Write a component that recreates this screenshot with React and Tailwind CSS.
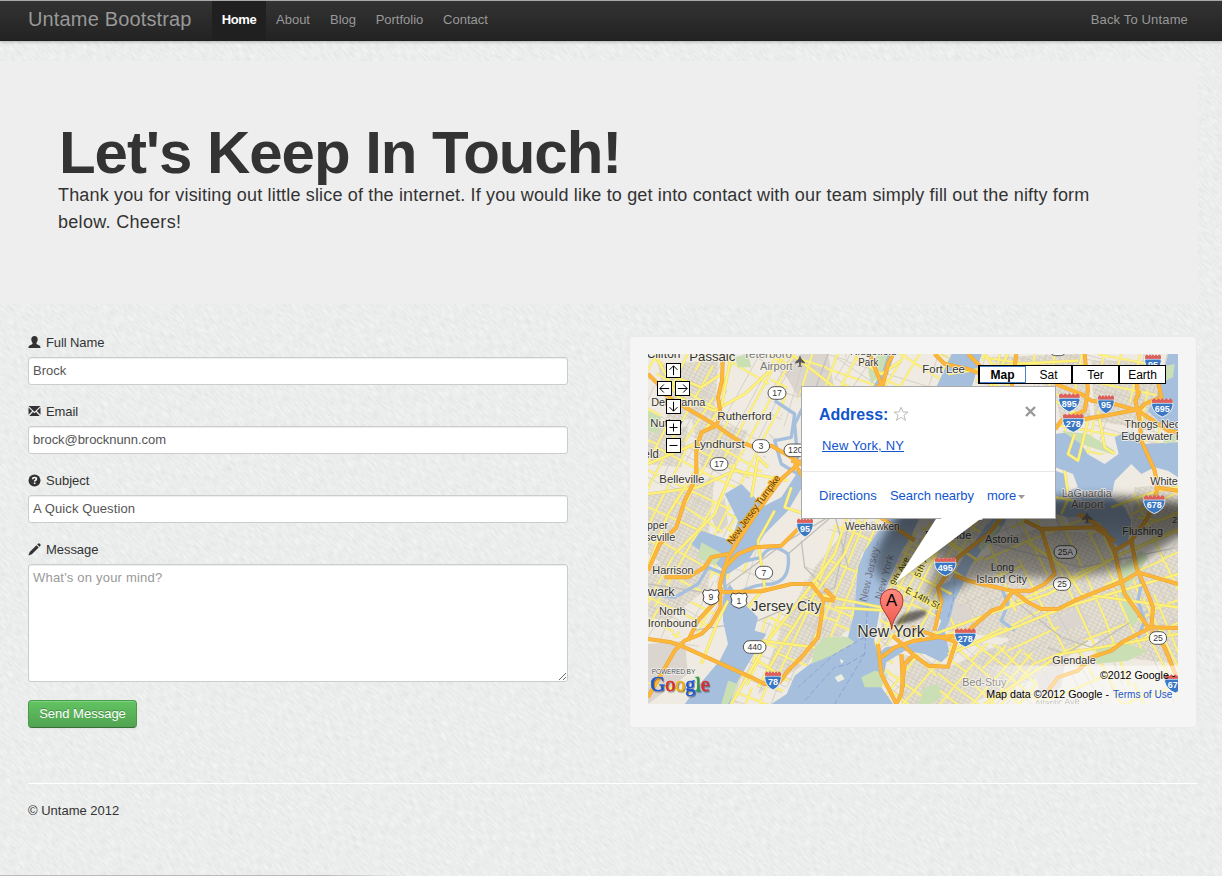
import React from "react";

/* ---------- map data (map units are a third of a pixel) ---------- */

function seeded(seed) {
  let s = seed;
  return () => {
    s = (s * 16807) % 2147483647;
    return s / 2147483647;
  };
}

function streets(seed, gap, density) {
  const rnd = seeded(seed);
  let d = "";
  for (let axis = 0; axis < 2; axis++) {
    for (let o = -1300; o < 1300; o += gap * (0.6 + rnd() * 0.9)) {
      let t = -1300;
      while (t < 1300) {
        const len = 90 + rnd() * 300;
        if (rnd() < density) {
          const w = (rnd() - 0.5) * 34;
          const a = o.toFixed(0);
          const b = (o + w).toFixed(0);
          const t0 = t.toFixed(0);
          const t1 = (t + len).toFixed(0);
          d += axis ? `M${t0} ${a}L${t1} ${b}` : `M${a} ${t0}L${b} ${t1}`;
        }
        t += len;
      }
    }
  }
  return d;
}

const regions = [
  { id: "rw", pts: "0,0 440,0 400,200 330,330 270,430 240,700 180,830 0,870", angle: 28, gap: 52, density: 0.66, seed: 11 },
  { id: "rm", pts: "440,0 900,0 900,110 460,110 420,200 330,330 280,500 480,560 620,480 520,700 240,720", angle: 18, gap: 110, density: 0.38, seed: 29 },
  { id: "rj", pts: "480,720 620,490 800,480 640,600 620,840 470,940 370,1050 240,1050 340,800", angle: 22, gap: 46, density: 0.62, seed: 37 },
  { id: "rn", pts: "560,0 960,0 960,110 560,110", angle: 30, gap: 48, density: 0.6, seed: 51 },
  { id: "rh", pts: "690,880 700,720 790,540 890,480 1060,480 960,600 870,700 860,840", angle: 28, gap: 32, density: 0.8, seed: 71 },
  { id: "rq", pts: "880,660 1010,520 1060,480 1590,400 1590,1050 1150,1050 1150,900 860,860", angle: -24, gap: 46, density: 0.66, seed: 83 },
  { id: "rb", pts: "660,860 860,840 1150,890 1180,1050 660,1050", angle: 40, gap: 36, density: 0.7, seed: 97 },
  { id: "rx", pts: "990,0 1590,0 1590,330 1470,280 1220,330 1220,110 980,110", angle: 12, gap: 42, density: 0.66, seed: 113 },
  { id: "rs", pts: "0,860 160,830 120,1050 0,1050", angle: 12, gap: 130, density: 0.4, seed: 131 },
];

const urban = [
  "30,30 210,20 200,190 60,200",
  "0,200 120,220 100,340 0,330",
  "130,190 300,230 260,330 160,340",
  "100,400 200,370 180,560 60,640 0,600 0,420",
  "0,640 200,560 180,700 60,800 0,790",
  "500,640 600,520 680,500 700,540 640,600 610,820 470,930 330,1020 400,820",
  "700,740 760,600 900,490 1040,490 900,700 860,840 700,860",
  "860,700 1020,600 1160,620 1200,760 1140,860 900,830",
  "1030,560 1190,520 1220,660 1020,690",
  "1200,530 1400,540 1440,700 1400,860 1160,840",
  "760,900 900,940 1150,830 1330,850 1200,960 960,1050 760,1050",
  "1010,10 1300,0 1330,200 1240,210 1220,110",
  "1330,20 1540,20 1520,230 1340,200",
  "1390,720 1590,560 1590,930 1340,900",
  "1460,400 1590,390 1590,540 1450,540",
];

const industrial = [
  "400,40 460,0 540,0 560,110 450,130",
  "0,870 110,860 120,960 0,1050",
  "1160,960 1250,930 1240,1000 1180,1030",
  "1200,810 1290,760 1330,800 1250,830",
  "1250,480 1400,440 1380,520 1270,520",
  "190,490 230,430 240,510 210,540",
  "900,740 970,760 960,800 900,800",
];

const water = [
  "M911 0H1001L968 110L800 110V490H815L790 545L765 585L735 650L700 740L690 800L678 860L690 900L712 880L790 870L860 850L880 800L860 780L870 730L866 700L905 680L940 620L975 570L1010 520L1040 490L1080 490L1055 530L1000 590L965 640L945 690L920 740L905 800L890 830L905 900L880 925L830 900L770 890L715 925L700 1000L735 1050H370L416 1020L440 965L486 930L540 880L600 850L618 780L630 640L650 590L700 520L720 490V300L860 110Z",
  "M230 420L280 390L330 440L350 455L400 430L445 360L462 340V400L420 470L385 505L350 540L300 620L240 660L170 600L130 570L160 530L250 560L270 500Z",
  "M225 730L245 690L280 740L330 790L320 830L355 840L300 930L270 980L245 1050H110L160 985L215 920L240 870L225 800Z",
  "M1222 240L1260 235L1300 270L1318 300L1370 330L1412 300L1400 250L1440 230L1480 270L1590 265V370L1560 350L1520 340L1480 360L1450 330L1400 380L1390 430L1430 460L1450 500L1440 560L1420 585L1390 560L1360 510L1310 485L1260 490L1222 480V350L1250 360L1260 410L1290 400L1275 360L1222 340Z",
  "M1560 0H1590V230L1550 220L1500 170L1530 120Z",
  "M715 0H740L720 60L690 110H670L700 50Z",
];

const rivers = [
  "M245 740Q210 660 250 630L340 610Q370 560 420 600Q430 680 370 690Q300 690 250 735",
  "M0 720L80 730L150 690L180 640L230 660",
  "M380 140L440 180L430 250L380 260L400 330L450 360",
  "M480 130L440 210L450 330",
  "M300 600L260 560L330 500",
  "M1450 570L1480 690L1470 740L1490 800L1470 850",
  "M1060 700L1080 750L1060 800L1100 830",
  "M980 240L1250 380",
];

const parks = [
  "M160 565L225 600L200 635L150 610Z",
  "M530 850L600 850L620 865L560 900L490 930L500 880Z",
  "M640 970L680 950L720 960L700 1000L650 1000Z",
  "M1400 650L1480 590L1500 610L1450 690L1420 700Z",
  "M1350 880L1440 870L1500 890L1440 920L1340 930Z",
  "M1530 40L1580 30L1575 70L1530 90Z",
  "M1240 230L1320 240L1400 290L1390 300L1300 270Z",
  "M1410 680L1440 700L1470 800L1450 820L1420 740Z",
  "M0 170L40 190L30 240L0 230Z",
  "M260 10L300 0L310 40L270 40Z",
  "M690 0L720 0L700 60L670 90L660 50Z",
  "M240 980L270 990L240 1050H220Z",
  "M830 1000L870 990L880 1030L850 1050H810Z",
  "M1540 250L1590 235V260L1550 270Z",
  "M1040 500L1060 520L1000 590L990 580Z",
];

const rails = [
  "M130 830L330 800L560 700L600 520",
  "M0 690L200 720L420 560L540 490",
  "M420 600L560 480L600 640",
  "M540 0L500 110",
  "M1100 740L1240 850L1330 880L1500 770",
  "M1000 560L1300 640L1590 580",
  "M460 560L470 640L530 700",
  "M1200 880L1250 900L1320 860",
];

const mainYellow = [
  "M0 330L140 270L220 160L250 0",
  "M20 0L90 130L200 170L290 120L420 0",
  "M60 60L160 100L220 60M0 420L150 400L260 350L420 380",
  "M150 340L60 480L0 640M260 330L200 480L80 600",
  "M430 0L560 100M620 10L700 60L760 20",
  "M310 430L330 310L360 340M430 400L410 460L470 480",
  "M380 470L330 560L350 700L300 760",
  "M240 740L210 800L160 930",
  "M600 480L560 600L470 720L360 860L250 1050",
  "M640 480L590 600L500 720L410 860L330 1000",
  "M500 720L700 760M560 760L720 770",
  "M330 920L420 980M340 860L500 880",
  "M900 60L1100 30L1290 20",
  "M1010 0L1090 110M1080 0L1020 110",
  "M1220 140L1320 200L1290 320L1260 300L1280 240",
  "M1350 170L1370 280L1400 300",
  "M1250 350L1262 430L1240 480M1220 430L1280 440",
  "M1390 460L1530 410L1590 400M1470 490L1530 500L1590 480",
  "M860 840L1050 770L1200 720L1420 600L1590 530",
  "M900 900L1250 760L1590 660",
  "M1010 1050L1240 900L1590 840",
  "M1130 560L1250 640L1300 720L1590 760",
  "M900 560L990 620M840 600L960 680",
  "M740 690L880 770M760 640L910 720",
];

const highways = [
  "M0 60L30 90L60 130L130 170L205 215L270 260L330 285L370 275L430 310L462 330",
  "M225 0L222 80L210 130L218 180L205 215L160 235L145 290L145 370L110 440L85 520L35 570L0 650",
  "M462 320L400 375L330 470L290 530L240 610L215 690L218 760L190 810L160 840L110 860L80 890L0 1030",
  "M470 505L400 575L320 580L270 600L230 640L215 700L225 715L340 712L430 690L490 690L525 735L520 790L510 850L460 910L420 950L395 985L350 990L310 970L110 880L70 865L0 855",
  "M120 860L150 800L205 740M50 670L120 670L170 640L190 610L240 600",
  "M462 330L430 320M440 330L465 370M560 120L590 150",
  "M665 0L680 40L700 90L670 110M700 110L720 30L735 0",
  "M700 492L800 560",
  "M860 0L890 30L960 45L1000 60M960 0L1010 50M1105 0L1090 110",
  "M1310 0L1320 110L1310 170L1240 200L1222 225",
  "M1222 90L1300 120L1330 140L1400 150L1470 170L1560 230L1590 235",
  "M1310 195L1400 180L1475 165L1490 150L1540 130L1520 30M1475 110L1462 140L1475 200L1480 260L1520 350L1530 400L1500 490L1450 560L1400 590L1370 530L1330 500L1290 480",
  "M1520 400L1590 410M1465 55L1470 130",
  "M1130 500L1180 525L1340 520L1400 560",
  "M1180 525L1200 590L1220 660L1190 690L1150 710L1090 710L1000 690L960 680L920 665",
  "M1060 492L1020 540L930 610L870 700L880 740L860 830",
  "M1095 710L1140 745L1180 765L1230 765L1280 740L1340 715L1430 680L1470 655L1590 690",
  "M1400 590L1410 640L1430 720L1480 790L1500 820L1590 822",
  "M1450 560L1465 640L1500 720L1515 760L1510 820L1430 860L1390 890L1330 910L1290 950L1230 970L1200 1010",
  "M1510 830L1550 880L1590 980",
  "M690 870L700 960L745 1050L760 1020L770 930L800 900",
  "M700 910L740 880L800 860L870 850L930 845",
  "M735 845L800 905L840 935L900 938L925 860L1030 770L1060 760L1095 710",
  "M790 820L860 845L930 865M765 1000L760 900",
  "M530 705L560 735M525 735L560 740",
];

function Interstate({ x, y, n, s = 1 }) {
  return (
    <g transform={`translate(${x} ${y}) scale(${s} 1)`}>
      <path d="M-30 -22H30L32 -6Q28 18 0 29Q-28 18 -32 -6Z" fill="#3a78c4" stroke="#fff" strokeWidth="2.5" />
      <path d="M-31 -22L-24 -27L-18 -22L-12 -27L-6 -22L0 -27L6 -22L12 -27L18 -22L24 -27L31 -22V-13H-31Z" fill="#dc5f5a" />
      <path d="M-31 -12H31" stroke="#fff" strokeWidth="2" />
      <text transform={`scale(${1 / s} 1)`} y="13" textAnchor="middle" fontSize="27" fontWeight="bold" fill="#fff">{n}</text>
    </g>
  );
}

function Route({ x, y, n, w = 54 }) {
  return (
    <g transform={`translate(${x} ${y})`}>
      <rect x={-w / 2} y="-19" width={w} height="38" rx="19" fill="#fff" stroke="#555" strokeWidth="3" />
      <text y="9" textAnchor="middle" fontSize="26" fill="#333">{n}</text>
    </g>
  );
}

function UsRoute({ x, y, n }) {
  return (
    <g transform={`translate(${x} ${y})`}>
      <path d="M-20 -22Q-10 -16 0 -22Q10 -16 20 -22L25 -12Q18 0 24 10Q18 20 0 24Q-18 20 -24 10Q-18 0 -25 -12Z" fill="#fff" stroke="#444" strokeWidth="3" />
      <text y="10" textAnchor="middle" fontSize="26" fill="#333">{n}</text>
    </g>
  );
}

const labels = [
  [-4, 13, 101, 36, "Clifton"], [124, 21, 138, 37, "Passaic"],
  [286, 12, 146, 33, "Teterboro", "#777"], [336, 47, 98, 33, "Airport", "#777"],
  [606, 4, 140, 33, "Ridgefield"], [631, 35, 60, 33, "Park"], [823, 56, 128, 34, "Fort Lee"],
  [10, 155, 162, 34, "Delawanna"], [7, 220, 96, 34, "Nutley"], [-126, 312, 158, 36, "Bloomfield"],
  [208, 197, 163, 35, "Rutherford"], [138, 281, 152, 35, "Lyndhurst"], [34, 386, 135, 35, "Belleville"],
  [-26, 524, 86, 34, "Upper"], [-51, 560, 133, 34, "Roseville"],
  [591, 529, 164, 32, "Weehawken"], [13, 659, 124, 34, "Harrison"],
  [-50, 725, 130, 40, "Newark"], [33, 784, 80, 33, "North"], [-1, 820, 148, 33, "Ironbound"],
  [310, 770, 210, 43, "Jersey City"], [628, 848, 202, 48, "New York"],
  [1429, 223, 184, 33, "Throgs Neck"], [1420, 258, 230, 33, "Edgewater Park"],
  [1507, 394, 160, 33, "Whitestone"], [1241, 428, 150, 32, "LaGuardia", "#667"], [1269, 463, 98, 32, "Airport", "#667"],
  [1423, 544, 122, 33, "Flushing"], [832, 556, 138, 33, "Riverside"], [1011, 566, 101, 33, "Astoria"],
  [1028, 650, 70, 33, "Long"], [985, 686, 152, 33, "Island City"],
  [1213, 930, 130, 33, "Glendale"], [943, 996, 132, 33, "Bed-Stuy", "#777"],
];

function ArrowBox({ x, y, kind }) {
  const d = {
    up: "M22 36V8M22 8L10 20M22 8L34 20",
    down: "M22 8V36M22 36L10 24M22 36L34 24",
    left: "M36 22H8M8 22L20 10M8 22L20 34",
    right: "M8 22H36M36 22L24 10M36 22L24 34",
    plus: "M22 10V34M10 22H34",
    minus: "M10 22H34",
  }[kind];
  return (
    <g transform={`translate(${x} ${y})`}>
      <rect x="1.500" y="1.500" width="42" height="42" fill="#fff" stroke="#000" strokeWidth="3" />
      <path d={d} transform="translate(.5 .5)" fill="none" stroke="#000" strokeWidth="3" />
    </g>
  );
}

function MapDrawing() {
  return (
    <svg className="block h-[350px] w-[530px]" viewBox="0 0 1590 1050" fontFamily="'Liberation Sans', Arial, sans-serif">
      <defs>
        <pattern id="blocks" width="14" height="11" patternUnits="userSpaceOnUse" patternTransform="rotate(27)">
          <rect width="14" height="11" fill="#e4dfd3" />
          <path d="M0 1H14M1 0V11" stroke="#cdc6ba" strokeWidth="2" />
        </pattern>
        <filter id="soft" x="-20%" y="-30%" width="140%" height="160%"><feGaussianBlur stdDeviation="15" /></filter>
        <filter id="softSmall" x="-30%" y="-50%" width="160%" height="200%"><feGaussianBlur stdDeviation="5" /></filter>
        <linearGradient id="shade" x1="0" y1="0" x2="0" y2="1">
          <stop offset=".25" stopOpacity=".6" />
          <stop offset=".7" stopOpacity=".42" />
          <stop offset="1" stopOpacity=".3" />
        </linearGradient>
        <linearGradient id="fade" x1="0" x2="1">
          <stop offset="0" stopColor="#fff" stopOpacity="0" />
          <stop offset=".35" stopColor="#fff" stopOpacity=".5" />
          <stop offset="1" stopColor="#fff" stopOpacity=".55" />
        </linearGradient>
        <linearGradient id="pin" x1="0" y1="0" x2="0" y2="1">
          <stop offset="0" stopColor="#fe8b80" />
          <stop offset="1" stopColor="#f0554c" />
        </linearGradient>
        {regions.map((r) => (
          <clipPath key={r.id} id={r.id}><polygon points={r.pts} /></clipPath>
        ))}
      </defs>
      <rect width="1590" height="1050" fill="#efebe2" />
      {urban.map((p) => <polygon key={p} points={p} fill="url(#blocks)" />)}
      {industrial.map((p) => <polygon key={p} points={p} fill="#dbd5cf" />)}
      {regions.map((r) => {
        const d = streets(r.seed, r.gap, r.density);
        const fine = streets(r.seed + 5, r.gap * 0.5, 0.3);
        return (
          <g key={r.id} clipPath={`url(#${r.id})`}>
            <g transform={`translate(795 525) rotate(${r.angle})`} fill="none">
              <path d={fine} stroke="#cfc8bd" strokeWidth="2" />
              <path d={d} stroke="#e8dc8c" strokeWidth="7" />
              <path d={d} stroke="#fff47c" strokeWidth="4.500" />
            </g>
          </g>
        );
      })}
      {rails.map((d) => <path key={d} d={d} fill="none" stroke="#c3c0bd" strokeWidth="4" />)}
      {water.map((d) => <path key={d} d={d} fill="#a5bfdd" />)}
      {rivers.map((d) => <path key={d} d={d} fill="none" stroke="#a5bfdd" strokeWidth="10" strokeLinejoin="round" />)}
      {parks.map((d) => <path key={d} d={d} fill="#cbdfb4" />)}
      <path d="M560 970L580 960L590 975L570 985ZM575 915L588 920L580 930Z" fill="#e8efe0" />
      <path d="M690 560L660 720L650 900L560 1050M650 850L560 900L450 1000M650 900L600 930L560 940L470 1040M920 680L915 740L900 790" fill="none" stroke="#8a9cd6" strokeWidth="2.500" strokeDasharray="16 8" />
      {mainYellow.map((d) => (
        <g key={d} fill="none" strokeLinejoin="round">
          <path d={d} stroke="#e3d27a" strokeWidth="9" />
          <path d={d} stroke="#fff37a" strokeWidth="6.500" />
        </g>
      ))}
      {highways.map((d) => <path key={d} d={d} fill="none" stroke="#eba235" strokeWidth="12" strokeLinejoin="round" />)}
      {highways.map((d) => <path key={d} d={d} fill="none" stroke="#fdb83c" strokeWidth="9" strokeLinejoin="round" />)}

      <g fill="#333" stroke="#f6f3ea" strokeWidth="5" strokeLinejoin="round" paintOrder="stroke">
        {labels.map(([x, y, w, size, text, fill]) => (
          <text key={text + x} x={x} y={y} fontSize={size} textLength={w} lengthAdjust="spacingAndGlyphs" fill={fill || "#333"}>{text}</text>
        ))}
        <text transform="translate(252 573) rotate(-54)" fontSize="29" textLength="248" stroke="#fdb83c" fill="#5a3a00">New Jersey Turnpike</text>
        <text transform="translate(655 745) rotate(-77)" fontSize="32" textLength="168" stroke="#a5bfdd" strokeWidth="2" fill="#778">New Jersey</text>
        <text transform="translate(700 738) rotate(-74)" fontSize="31" textLength="138" stroke="#a5bfdd" strokeWidth="2" fill="#778">New York</text>
        <text transform="translate(770 715) rotate(27)" fontSize="28" textLength="112" stroke="#fff37a">E 14th St</text>
        <text transform="translate(815 672) rotate(-66)" fontSize="27" textLength="98" stroke="#fff37a">5th Ave</text>
        <text transform="translate(742 696) rotate(-62)" fontSize="27" textLength="92" stroke="#fff37a">9th Ave</text>
        <text x="1160" y="1058" fontSize="28" textLength="135" transform="rotate(-3 1160 1058)" fill="#888">Atlantic Ave</text>
        <text x="1572" y="508" fontSize="28">25</text>
      </g>
      <path d="M456 4L460 14L470 24V29L459 25L458 34L463 38H449L454 34L453 25L442 29V24L452 14Z" fill="#555" />

      <Route x={387} y={117} n="17" /><Route x={339} y={276} n="3" w={52} /><Route x={213} y={330} n="17" />
      <Route x={442} y={289} n="120" w={68} /><Route x={348} y={656} n="7" w={52} /><Route x={320} y={879} n="440" w={68} />
      <Route x={1252} y={594} n="25A" w={68} /><Route x={1242} y={690} n="25" w={52} /><Route x={1530} y={852} n="25" w={52} />
      <Route x={1230} y={-14} n="1" w={52} />
      <UsRoute x={189} y={729} n="9" /><UsRoute x={273} y={739} n="1" />
      <Interstate x={471} y={520} n="95" s={0.77} /><Interstate x={375} y={979} n="78" s={0.77} />
      <Interstate x={1515} y={28} n="95" s={0.77} /><Interstate x={1264} y={145} n="895" /><Interstate x={1374} y={150} n="95" s={0.77} />
      <Interstate x={1543} y={160} n="695" /><Interstate x={1276} y={206} n="278" />

      <path d="M705 690L675 640Q680 560 760 470L1222 430Q1400 415 1640 450V520L1480 625Q1370 672 1180 674Q1010 650 950 695L860 735L830 725L880 600Z" fill="url(#shade)" filter="url(#soft)" />
      <path d="M740 815Q755 770 830 768Q850 780 800 800Z" fill="#000" opacity=".5" filter="url(#softSmall)" />
      <Interstate x={1519} y={450} n="678" /><Interstate x={892} y={637} n="495" /><Interstate x={952} y={850} n="278" />
      <path d="M1317 474L1321 484L1333 494V499L1321 495L1320 503L1326 508H1309L1315 503L1314 495L1302 499V494L1313 484Z" fill="#333" />
      <path d="M870 485H1010L741 688Z" fill="#fff" />

      <path d="M731 826C729 785 697 772 697 739A34 34 0 0 1 765 739C765 772 734 785 731 826Z" fill="url(#pin)" stroke="#a23832" strokeWidth="3" />
      <text x="731" y="755" textAnchor="middle" fontSize="50" fill="#000">A</text>

      <rect x="930" y="935" width="660" height="115" fill="url(#fade)" />
      <Interstate x={1582} y={988} n="678" />
      <g fontSize="31">
        <text x="1356" y="974" textLength="226" lengthAdjust="spacingAndGlyphs" fill="#000">©2012 Google -</text>
        <text x="1015" y="1031" textLength="368" lengthAdjust="spacingAndGlyphs" fill="#000">Map data ©2012 Google -</text>
        <text x="1395" y="1031" textLength="178" lengthAdjust="spacingAndGlyphs" fill="#2255cc">Terms of Use</text>
      </g>
      <text x="11" y="961" fontSize="20" textLength="131" fill="#444" stroke="#fff" strokeWidth="3" paintOrder="stroke">POWERED BY</text>
      <text x="7" y="1012" fontFamily="'Liberation Serif', 'Times New Roman', serif" fontSize="60" strokeWidth="1.6" className="[filter:drop-shadow(3px_4px_1px_rgba(0,0,0,0.4))]">
        <tspan fill="#1d54d6" stroke="#1d54d6" fontSize="62">G</tspan><tspan fill="#df2b2b" stroke="#df2b2b">o</tspan><tspan fill="#efb118" stroke="#efb118">o</tspan><tspan fill="#1d54d6" stroke="#1d54d6">g</tspan><tspan fill="#1f9c3a" stroke="#1f9c3a">l</tspan><tspan fill="#df2b2b" stroke="#df2b2b">e</tspan>
      </text>

      <ArrowBox x={54} y={27} kind="up" /><ArrowBox x={27} y={81} kind="left" /><ArrowBox x={81} y={81} kind="right" />
      <ArrowBox x={54} y={135} kind="down" /><ArrowBox x={54} y={198} kind="plus" /><ArrowBox x={54} y={252} kind="minus" />
    </svg>
  );
}

function MapPanel() {
  return (
    <div className="relative h-[350px] w-[530px] overflow-hidden">
      <MapDrawing />
      <div className="absolute left-[330px] top-[11px] flex h-[19px] w-[188px] border border-l-2 border-r-1 border-black bg-white text-center text-[12px] leading-[18px] text-black">
        <div className="w-[46px] border border-l-0 border-[#4a7fcb] font-bold leading-[17px]">Map</div>
        <div className="w-[47px] border-r-2 border-black">Sat</div>
        <div className="w-[47px] border-r-2 border-black">Ter</div>
        <div className="w-[45px]">Earth</div>
      </div>
      <div className="absolute left-[153px] top-[32px] h-[133px] w-[255px] border border-[#aaa] bg-white text-[#1155cc]">
        <div className="flex h-[85px] flex-col border-b border-[#e8e8e8] pl-[17px] pt-[17px]">
          <div className="flex h-[22px] items-center">
            <span className="w-[70px] whitespace-nowrap text-[16px] font-bold">Address:</span>
            <svg className="ml-[4px] mb-[2px] h-4 w-4" viewBox="0 0 16 16"><path d="M8 1.2L9.900 6H15L10.900 9.200L12.500 14.400L8 11.300L3.500 14.400L5.100 9.200L1 6H6.100Z" fill="none" stroke="#bbb" /></svg>
            <svg className="ml-[116px] mb-[7px] h-[11px] w-[11px]" viewBox="0 0 11 11"><path d="M1 1L10 10M10 1L1 10" stroke="#999" strokeWidth="2.4" /></svg>
          </div>
          <a className="ml-[3px] mt-[11px] w-fit text-[13px] leading-[18px] tracking-[0.15px] underline">New York, NY</a>
        </div>
        <div className="flex h-[47px] items-center whitespace-nowrap pl-[17px] text-[13px]">
          <span className="w-[71px]">Directions</span>
          <span className="w-[97px] tracking-[-0.05px]">Search nearby</span>
          <span className="tracking-[-0.1px]">more</span>
          <svg className="ml-[2px] mt-[2px] h-[4px] w-[7px]" viewBox="0 0 7 4"><path d="M0 0H7L3.500 4Z" fill="#999" /></svg>
        </div>
      </div>
      <svg className="absolute left-0 top-0 h-[350px] w-[530px]" viewBox="0 0 1590 1050">
        <path d="M880 487H1003V497H880Z" fill="#fff" />
      </svg>
    </div>
  );
}

/* ---------- page ---------- */

const icons = {
  user: "M6.5 0C8.6 0 9.9 1.6 9.7 3.8C9.6 5.4 8.7 6.4 8.4 7.1C8.3 8 8.7 8.4 10.4 9C12 9.6 12.5 10.3 12.5 12H.5C.5 10.3 1 9.6 2.600 9C4.300 8.400 4.700 8 4.600 7.100C4.300 6.400 3.400 5.400 3.300 3.800C3.100 1.600 4.400 0 6.500 0Z",
  mail: "M.5 1H12.500L6.500 6.800ZM.5 2.400L4.100 6L.5 9.700ZM12.500 2.400L8.900 6L12.500 9.700ZM1.300 10.900L5 6.900L6.500 8.300L8 6.900L11.700 10.900Z",
  pencil: "M10.300.500Q11 0 11.800.700L12.400 1.300Q13 2.100 12.400 2.800L11.400 3.800L9.200 1.600ZM8.500 2.300L10.700 4.500L3.800 11.200L.4 12.500L1.700 9.100Z",
};

function LabelIcon({ name }) {
  if (name === "question") {
    return (
      <svg className="mb-px h-[13px] w-[13px]" viewBox="0 0 13 13">
        <circle cx="6.500" cy="6.500" r="6" fill="#333" />
        <path d="M4.600 5.200Q4.700 3.500 6.500 3.500Q8.400 3.500 8.400 5Q8.400 5.900 7.300 6.400Q6.600 6.700 6.600 7.600M6.600 8.600V10.100" fill="none" stroke="#fff" strokeWidth="1.600" />
      </svg>
    );
  }
  return <svg className="mb-px h-[13px] w-[13px]" viewBox="0 0 13 13"><path d={icons[name]} fill="#333" /></svg>;
}

function FieldLabel({ icon, children, spacing }) {
  return (
    <label className={`flex h-[18px] items-center gap-[5px] ${spacing}`}><LabelIcon name={icon} />{children}</label>
  );
}

function Field({ icon, label, value, spacing, labelSpacing }) {
  return (
    <div className="h-[69px]">
      <FieldLabel icon={icon} spacing={labelSpacing}>{label}</FieldLabel>
      <input
        className={`mt-[5px] block h-[28px] w-[540px] rounded-[3px] border border-[#ccc] bg-white px-1 pb-[2px] text-[#555] shadow-[inset_0_1px_1px_rgba(0,0,0,0.075)] outline-none ${spacing}`}
        defaultValue={value}
      />
    </div>
  );
}

const navItems = [
  ["Home", "w-[54px] bg-[#202020] font-bold text-white tracking-[-0.35px]"],
  ["About", "w-[54px]"],
  ["Blog", "w-[46px]"],
  ["Portfolio", "w-[67px]"],
  ["Contact", "w-[65px]"],
];

export default function App() {
  return (
    <div className="relative h-[876px] w-[1222px] overflow-hidden bg-[#ebedec] font-['Liberation_Sans',Arial,sans-serif] text-[13px] leading-[18px] text-[#333]">
      <svg className="absolute inset-0 h-[876px] w-[1222px]" viewBox="0 0 1222 876">
        <defs>
          <filter id="paper" x="0" y="0" width="100%" height="100%" colorInterpolationFilters="sRGB">
            <feTurbulence type="fractalNoise" baseFrequency="0.12 0.6" numOctaves="2" seed="4" />
            <feColorMatrix values=".1 0 0 0 .872  .1 0 0 0 .880  .1 0 0 0 .876  0 0 0 0 1" />
          </filter>
        </defs>
        <g transform="rotate(45 611 438)"><rect x="-200" y="-400" width="1650" height="1700" filter="url(#paper)" /></g>
      </svg>
      <div className="relative flex h-full flex-col">
        <nav className="flex h-[41px] shrink-0 border-t border-[#aaa] bg-linear-to-b from-[#333] to-[#222] pl-[28px] pr-[34px] text-[#999] shadow-[0_1px_3px_rgba(0,0,0,0.25),inset_0_-1px_0_rgba(0,0,0,0.1)]">
          <div className="w-[184px] whitespace-nowrap text-[20px] leading-[37px] tracking-[0.15px]">Untame Bootstrap</div>
          {navItems.map(([name, cls]) => (
            <a key={name} className={`text-center leading-[38px] ${cls}`}>{name}</a>
          ))}
          <a className="ml-auto leading-[38px] tracking-[0.15px]">Back To Untame</a>
        </nav>
        <header className="mt-[20px] h-[243px] w-[1198px] shrink-0 rounded-r-[6px] bg-[#eee] pl-[58px] pt-[61px]">
          <h1 className="ml-px h-[60px] whitespace-nowrap text-[60px] font-bold leading-[62px] tracking-[-1.05px]">Let's Keep In Touch!</h1>
          <p className="whitespace-nowrap text-[18px] leading-[27px]">
            <span className="tracking-[0.165px]">Thank you for visiting out little slice of the internet. If you would like to get into contact with our team simply fill out the nifty form</span>
            <br />
            <span className="tracking-[0.3px]">below. Cheers!</span>
          </p>
        </header>
        <main className="flex shrink-0 pl-[28px] pt-[30px]">
          <form className="w-[601px]">
            <Field icon="user" label="Full Name" value="Brock" spacing="tracking-normal" labelSpacing="tracking-[-0.1px]" />
            <Field icon="mail" label="Email" value="brock@brocknunn.com" spacing="tracking-[-0.05px]" labelSpacing="tracking-[-0.1px]" />
            <Field icon="question" label="Subject" value="A Quick Question" spacing="tracking-[0.1px]" labelSpacing="tracking-normal" />
            <FieldLabel icon="pencil" spacing="tracking-[-0.05px]">Message</FieldLabel>
            <textarea
              className="mt-[5px] block h-[118px] w-[540px] rounded-[3px] border border-[#ccc] bg-white p-1 tracking-[0.2px] shadow-[inset_0_1px_1px_rgba(0,0,0,0.075)] outline-none placeholder:text-[#999]"
              placeholder="What's on your mind?"
            />
            <button
              type="button"
              className="mt-[18px] h-[28px] w-[109px] rounded-[4px] border border-[#4a9a4a] border-b-[#387038] bg-linear-to-b from-[#62c462] to-[#51a351] text-white shadow-[inset_0_1px_0_rgba(255,255,255,0.2),0_1px_2px_rgba(0,0,0,0.05)] [text-shadow:0_-1px_0_rgba(0,0,0,0.25)]"
            >
              Send Message
            </button>
          </form>
          <section className="mt-px h-[393px] w-[568px] rounded-[4px] border border-[#eaeaea] bg-[#f5f5f5] pl-[18px] pt-[18px] shadow-[inset_0_1px_1px_rgba(0,0,0,0.05)]">
            <MapPanel />
          </section>
        </main>
        <footer className="ml-[28px] mt-[55px] w-[1170px] shrink-0 border-t border-white pt-[18px]">© Untame 2012</footer>
        <div className="mt-auto h-px w-[406px] shrink-0 bg-linear-to-r from-[#bbb] from-80% to-transparent" />
      </div>
    </div>
  );
}
